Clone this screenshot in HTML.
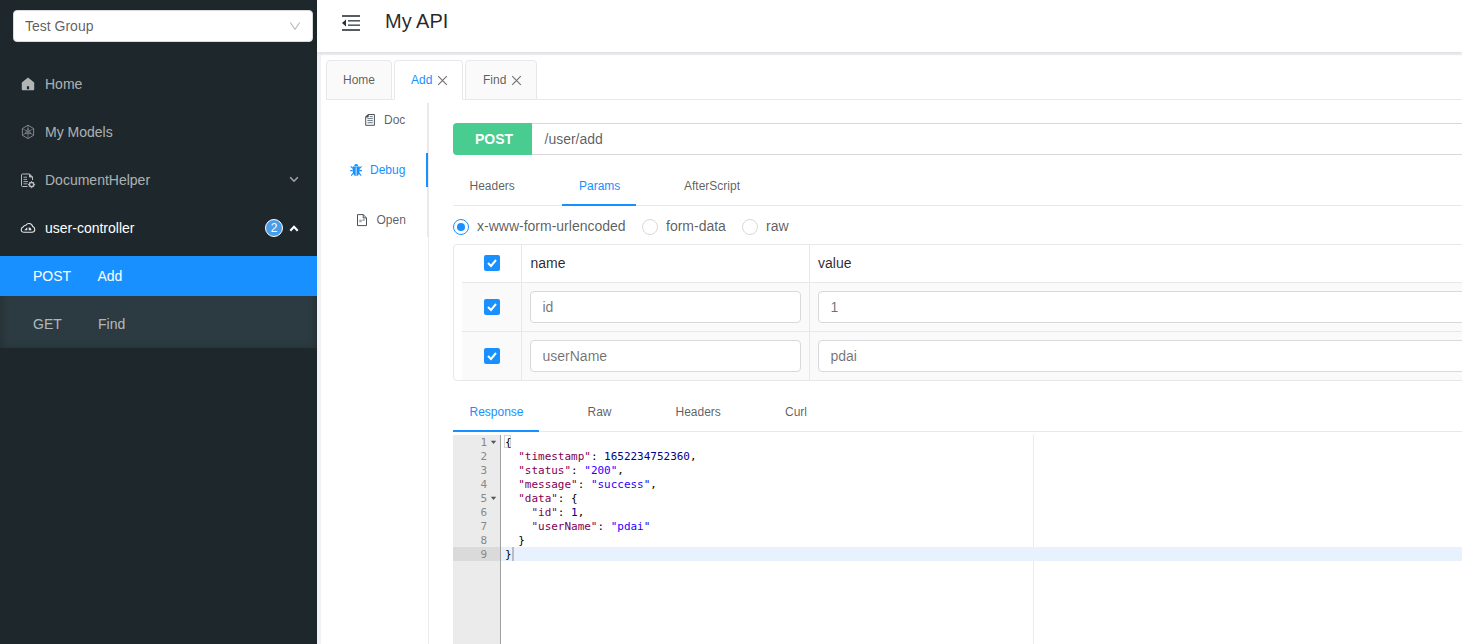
<!DOCTYPE html>
<html lang="en">
<head>
<meta charset="utf-8">
<title>My API</title>
<style>
*{box-sizing:border-box;margin:0;padding:0}
html,body{width:1462px;height:644px;overflow:hidden;background:#fff;font-family:"Liberation Sans",Arial,sans-serif;font-size:14px;color:rgba(0,0,0,.65)}
.abs{position:absolute}
#side{position:absolute;left:0;top:0;width:317px;height:644px;background:#1e282c}
#grp{position:absolute;left:13px;top:10px;width:300px;height:32px;background:#fff;border:1px solid #d9d9d9;border-radius:4px;color:rgba(0,0,0,.65);font-size:14px;line-height:30px;padding-left:11px}
.mi{position:absolute;left:0;width:317px;height:40px;line-height:40px;color:rgba(255,255,255,.65);font-size:14px}
.mi .t{position:absolute;left:45px;top:0}
.mi svg{position:absolute}
.sub{position:absolute;left:0;top:256px;width:317px;height:92px;background:#2c3b41;box-shadow:inset 0 2px 8px rgba(0,0,0,.3)}
.sel{position:absolute;left:0;top:256px;width:317px;height:40px;background:#1890ff}
#head{position:absolute;left:317px;top:0;width:1145px;height:52px;background:#fff;box-shadow:0 1px 4px rgba(0,21,41,.12)}
#title{position:absolute;left:385px;top:7px;font-size:20px;color:rgba(0,0,0,.85);line-height:28px;white-space:nowrap}
.tab{position:absolute;top:60px;height:40px;border:1px solid #e8e8e8;border-radius:4px 4px 0 0;background:#fafafa;font-size:12px;line-height:38px;color:rgba(0,0,0,.65);white-space:nowrap}
.tab.act{background:#fff;border-bottom-color:#fff;color:#1890ff}
.hl{position:absolute;height:1px;background:#e8e8e8}
.vl{position:absolute;width:1px;background:#e8e8e8}
.txt{position:absolute;white-space:nowrap;line-height:20px}
.s12{font-size:12px}
.inp{position:absolute;height:32px;border:1px solid #d9d9d9;border-radius:4px;background:#fff;line-height:30px;padding-left:11.5px;font-size:14px;color:rgba(0,0,0,.56);white-space:nowrap}
.cb{position:absolute;width:16px;height:16px;background:#1890ff;border-radius:2px}
.cb svg{position:absolute;left:0;top:0}
.rad{position:absolute;width:16px;height:16px;border:1px solid #d9d9d9;border-radius:50%;background:#fff}
.rad.on{border-color:#1890ff}
.rad.on:after{content:"";position:absolute;left:3px;top:3px;width:8px;height:8px;border-radius:50%;background:#1890ff}
#gut{position:absolute;left:453px;top:435px;width:48px;height:209px;background:#ebebeb;border-right:1px solid #9f9f9f}
.code{position:absolute;font-family:"DejaVu Sans Mono","Liberation Mono",monospace;font-size:10.97px;line-height:14px;white-space:pre;color:#000}
.k{color:#7f0055}.n{color:#00008b}.s{color:#2a00ff}
.ln{position:absolute;left:453px;width:34px;text-align:right;white-space:pre;font-family:"DejaVu Sans Mono","Liberation Mono",monospace;font-size:10.97px;line-height:14px;color:#888}
</style>
</head>
<body>
<!-- SIDEBAR -->
<div id="side">
  <div id="grp">Test Group
    <svg class="abs" style="right:10.8px;top:9px" width="12" height="12" viewBox="0 0 12 12"><path d="M1.3 2.6 L6 9.3 L10.7 2.6" fill="none" stroke="#bcbcbc" stroke-width="1.1"/></svg>
  </div>
  <div class="sub"></div>
  <div class="sel"></div>
  <div class="mi" style="top:64px"><svg style="left:21px;top:13px" width="14" height="14" viewBox="0 0 14 14"><path d="M7 0.6 L13.2 5.6 L13.2 12.2 Q13.2 13.2 12.2 13.2 L1.8 13.2 Q0.8 13.2 0.8 12.2 L0.8 5.6 Z M5.9 12.3 L5.9 9.2 L8.1 9.2 L8.1 12.3 Z" fill="#b3b4b6" fill-rule="evenodd"/></svg><span class="t">Home</span></div>
  <div class="mi" style="top:112px"><svg style="left:21px;top:12px" width="14" height="16" viewBox="0 0 14 16"><g fill="none" stroke="#9a9da0" stroke-width="0.8"><path d="M7 1.2 L12.6 4.5 L12.6 11.3 L7 14.6 L1.4 11.3 L1.4 4.5 Z"/><path d="M7 1.2 L7 14.6 M1.4 4.5 L12.6 11.3 M12.6 4.5 L1.4 11.3" stroke-width="0.55"/><path d="M7 4.4 L10 9.6 L4 9.6 Z" stroke-width="0.55"/></g></svg><span class="t">My Models</span></div>
  <div class="mi" style="top:160px"><svg style="left:20px;top:12.5px" width="16" height="16" viewBox="0 0 16 16"><g fill="none" stroke="#b9bbbd" stroke-width="1"><path d="M12.5 7 L12.5 4 L9.5 1 L2.5 1 Q1.5 1 1.5 2 L1.5 12.5 Q1.5 13.5 2.5 13.5 L7.5 13.5"/><path d="M9.5 1 L9.5 4 L12.5 4" fill="#b9bbbd"/><path d="M3.5 4.2 L7 4.2 M3.5 6.4 L7 6.4 M3.5 8.6 L8 8.6 M3.5 10.8 L7.5 10.8" stroke-width="0.9"/><circle cx="11.6" cy="11.6" r="2.2" stroke-width="1.5"/><path d="M11.6 8 L11.6 9 M11.6 14.2 L11.6 15.2 M8 11.6 L9 11.6 M14.2 11.6 L15.2 11.6 M9.1 9.1 L9.8 9.8 M13.4 13.4 L14.1 14.1 M9.1 14.1 L9.8 13.4 M13.4 9.8 L14.1 9.1" stroke-width="1"/></g></svg><span class="t">DocumentHelper</span><svg style="left:289px;top:16px" width="10" height="8" viewBox="0 0 10 8"><path d="M1.2 1.2 L5 5.2 L8.8 1.2" fill="none" stroke="#a2a5a8" stroke-width="1.6"/></svg></div>
  <div class="mi" style="top:208px;color:#fff"><svg style="left:20px;top:14px" width="16" height="12" viewBox="0 0 16 12"><path d="M4.2 10.3 Q1.2 10.3 1.2 7.6 Q1.2 5.4 3.4 4.7 Q4.1 3.1 5.9 3.3 Q7 1.5 9.2 1.6 Q12 1.7 12.7 4.5 Q14.8 5.2 14.8 7.6 Q14.8 10.3 11.8 10.3 Z" fill="none" stroke="#e8e9ea" stroke-width="1.05"/><path d="M4.3 8.3 L7.3 5.2 L7.3 8.3 Z M8.7 8.3 L8.7 5.3 L10.6 6 L11.6 8.3 Z" fill="#e8e9ea"/></svg><span class="t">user-controller</span><div class="abs" style="left:265px;top:11px;width:18px;height:18px;border-radius:9px;background:#4a9ee8;border:1px solid #fff;color:#fff;font-size:12px;line-height:16px;text-align:center">2</div><svg style="left:289px;top:16px" width="10" height="8" viewBox="0 0 10 8"><path d="M1.3 6.7 L5 2.7 L8.7 6.7" fill="none" stroke="#fff" stroke-width="2.1"/></svg></div>
  <div class="mi" style="top:256px;color:#fff"><span class="t" style="left:33px">POST</span><span class="t" style="left:97.5px">Add</span></div>
  <div class="mi" style="top:304px"><span class="t" style="left:33px">GET</span><span class="t" style="left:98px">Find</span></div>
</div>

<!-- HEADER -->
<div class="abs" style="left:317px;top:52px;width:4px;height:592px;background:#f0f2f5"></div>
<div class="abs" style="left:317px;top:52px;width:1145px;height:3px;background:#f0f2f5"></div>
<div id="head"></div>
<svg class="abs" style="left:341px;top:14px" width="20" height="18" viewBox="0 0 20 18"><g fill="#565c62"><rect x="1" y="1" width="18" height="2"/><rect x="7" y="6" width="12" height="1.6"/><rect x="7" y="10.4" width="12" height="1.6"/><rect x="1" y="15" width="18" height="2"/><path d="M1 9 L5 5.6 L5 12.4 Z" fill="#2b3136"/></g></svg>
<div id="title">My API</div>

<!-- TABS -->
<div class="hl" style="left:326px;top:99px;width:1136px"></div>
<div class="tab" style="left:326px;width:66px;padding-left:16px">Home</div>
<div class="tab act" style="left:394px;width:69px;padding-left:16px">Add</div>
<div class="tab" style="left:465px;width:72px;padding-left:17px">Find</div>

<svg class="abs" style="left:437px;top:75px" width="11" height="11" viewBox="0 0 11 11"><path d="M1.2 1.2 L9.8 9.8 M9.8 1.2 L1.2 9.8" fill="none" stroke="#707070" stroke-width="1.1"/></svg>
<svg class="abs" style="left:511px;top:75px" width="11" height="11" viewBox="0 0 11 11"><path d="M1.2 1.2 L9.8 9.8 M9.8 1.2 L1.2 9.8" fill="none" stroke="#707070" stroke-width="1.1"/></svg>
<!-- LEFT VERTICAL TABS -->
<div class="vl" style="left:427px;top:103px;height:134px;width:2px;background:#e9e9e9"></div>
<div class="vl" style="left:428px;top:237px;height:407px;background:#ececec"></div>
<div class="abs" style="left:426px;top:153px;width:2px;height:34px;background:#1890ff"></div>
<div class="txt s12" style="left:384px;top:110px">Doc</div>
<div class="txt s12" style="left:370px;top:160px;color:#1890ff">Debug</div>
<div class="txt s12" style="left:376.5px;top:210px">Open</div>

<svg class="abs" style="left:364px;top:113px" width="12" height="14" viewBox="0 0 12 14"><g fill="none" stroke="#48525a" stroke-width="1"><path d="M1.7 4 L4.2 1.5 L10.4 1.5 L10.4 12.3 L1.7 12.3 Z"/><path d="M1.7 4 L4.2 4 L4.2 1.5 Z" fill="#48525a"/><path d="M5.8 3.6 L8.8 3.6 M3.4 5.6 L8.8 5.6 M3.4 7.6 L8.8 7.6 M3.4 9.7 L8.8 9.7" stroke-width="0.8"/></g></svg>
<svg class="abs" style="left:349px;top:163px" width="15" height="14" viewBox="0 0 15 14"><g fill="#1890ff" stroke="none"><path d="M5.2 3 Q5.2 1 7.2 1 Q9.2 1 9.2 3 Z"/><path d="M3.6 3.6 L10.8 3.6 Q11 8 10.3 10.4 Q9.2 12.9 7.2 12.9 Q5.2 12.9 4.1 10.4 Q3.4 8 3.6 3.6 Z"/></g><path d="M1.7 3.4 L3.8 5.4 M12.6 3.4 L10.6 5.4 M1.2 7.6 L3.6 7.6 M10.8 7.6 L13 7.6 M2.1 12.6 L4.4 10.2 M12.2 12.6 L10 10.2" fill="none" stroke="#1890ff" stroke-width="1.1"/><rect x="6.4" y="4.4" width="1.6" height="8.4" fill="#8cc8ff"/></svg>
<svg class="abs" style="left:356px;top:213px" width="12" height="14" viewBox="0 0 12 14"><g fill="none" stroke="#48525a" stroke-width="1"><path d="M1.5 1.6 L7.2 1.6 L10.5 4.9 L10.5 12.6 L1.5 12.6 Z"/><path d="M7.2 1.6 L7.2 4.9 L10.5 4.9"/></g><path d="M3.2 6.8 L7 6.8 L7 5.8 L8.8 5.8 L8.8 7.8 L5.6 7.8 L5.6 9.2 L3.2 9.2 Z" fill="#a8a8a8"/></svg>
<!-- URL BAR -->
<div class="abs" style="left:532px;top:123px;width:940px;height:32px;border:1px solid #d9d9d9;border-left:none;background:#fff"></div>
<div class="abs" style="left:453px;top:123px;width:79px;height:32px;background:#49cc90;border-radius:4px 0 0 4px;color:#fff;font-weight:bold;font-size:14px;line-height:32px;padding-left:22px">POST</div>
<div class="txt" style="left:544.5px;top:129px">/user/add</div>

<!-- REQUEST TABS -->
<div class="hl" style="left:453px;top:205px;width:1009px"></div>
<div class="abs" style="left:562px;top:204px;width:74px;height:2px;background:#1890ff"></div>
<div class="txt s12" style="left:469.5px;top:176px">Headers</div>
<div class="txt s12" style="left:579px;top:176px;color:#1890ff">Params</div>
<div class="txt s12" style="left:684px;top:176px">AfterScript</div>

<!-- RADIOS -->
<div class="rad on" style="left:453px;top:219px"></div>
<div class="txt" style="left:477px;top:216px">x-www-form-urlencoded</div>
<div class="rad" style="left:642px;top:219px"></div>
<div class="txt" style="left:666px;top:216px">form-data</div>
<div class="rad" style="left:742px;top:219px"></div>
<div class="txt" style="left:766px;top:216px">raw</div>

<!-- TABLE -->
<div class="abs" style="left:453px;top:244px;width:1020px;height:137px;border:1px solid #e8e8e8;border-radius:4px 0 0 4px;background:#fff"></div>
<div class="abs" style="left:462px;top:283px;width:1000px;height:97px;background:#fafafa"></div>
<div class="hl" style="left:462px;top:282px;width:1000px"></div>
<div class="hl" style="left:462px;top:331px;width:1000px"></div>
<div class="vl" style="left:521px;top:245px;height:135px"></div>
<div class="vl" style="left:809px;top:245px;height:135px"></div>
<div class="txt" style="left:530.5px;top:253px;color:rgba(0,0,0,.85)">name</div>
<div class="txt" style="left:818px;top:253px;color:rgba(0,0,0,.85)">value</div>
<div class="cb" style="left:484px;top:255px"><svg width="16" height="16" viewBox="0 0 16 16"><path d="M4 8 L7 11 L12 5" fill="none" stroke="#fff" stroke-width="2"/></svg></div>
<div class="cb" style="left:484px;top:299px"><svg width="16" height="16" viewBox="0 0 16 16"><path d="M4 8 L7 11 L12 5" fill="none" stroke="#fff" stroke-width="2"/></svg></div>
<div class="cb" style="left:484px;top:348px"><svg width="16" height="16" viewBox="0 0 16 16"><path d="M4 8 L7 11 L12 5" fill="none" stroke="#fff" stroke-width="2"/></svg></div>
<div class="inp" style="left:530px;top:291px;width:271px">id</div>
<div class="inp" style="left:530px;top:340px;width:271px">userName</div>
<div class="inp" style="left:818px;top:291px;width:660px">1</div>
<div class="inp" style="left:818px;top:340px;width:660px">pdai</div>

<!-- RESPONSE TABS -->
<div class="hl" style="left:453px;top:431px;width:1009px"></div>
<div class="abs" style="left:453px;top:430px;width:86px;height:2px;background:#1890ff"></div>
<div class="txt s12" style="left:469.5px;top:402px;color:#1890ff">Response</div>
<div class="txt s12" style="left:587.5px;top:402px">Raw</div>
<div class="txt s12" style="left:675.5px;top:402px">Headers</div>
<div class="txt s12" style="left:785px;top:402px">Curl</div>

<!-- EDITOR -->
<div class="vl" style="left:1033px;top:435px;height:209px;background:#ebebeb"></div>
<div class="abs" style="left:501px;top:547px;width:961px;height:14px;background:#e8f2fe"></div>
<div id="gut"></div>
<div class="abs" style="left:453px;top:547px;width:47px;height:14px;background:#dadada"></div>
<svg class="abs" style="left:490px;top:440px" width="7" height="5" viewBox="0 0 7 5"><path d="M0.8 0.8 L6.2 0.8 L3.5 4 Z" fill="#555"/></svg>
<svg class="abs" style="left:490px;top:496px" width="7" height="5" viewBox="0 0 7 5"><path d="M0.8 0.8 L6.2 0.8 L3.5 4 Z" fill="#555"/></svg>
<div class="abs" style="left:504px;top:435px;width:7px;height:13px;border:1px solid #d4d4d4"></div>
<div class="abs" style="left:512px;top:547px;width:2px;height:14px;background:#bdbdbd"></div>
<div class="ln" style="top:436px">1
2
3
4
5
6
7
8
9</div>
<div class="code" style="left:505px;top:435.5px">{
  <span class="k">"timestamp"</span>: <span class="n">1652234752360</span>,
  <span class="k">"status"</span>: <span class="s">"200"</span>,
  <span class="k">"message"</span>: <span class="s">"success"</span>,
  <span class="k">"data"</span>: {
    <span class="k">"id"</span>: <span class="n">1</span>,
    <span class="k">"userName"</span>: <span class="s">"pdai"</span>
  }
}</div>
</body>
</html>
